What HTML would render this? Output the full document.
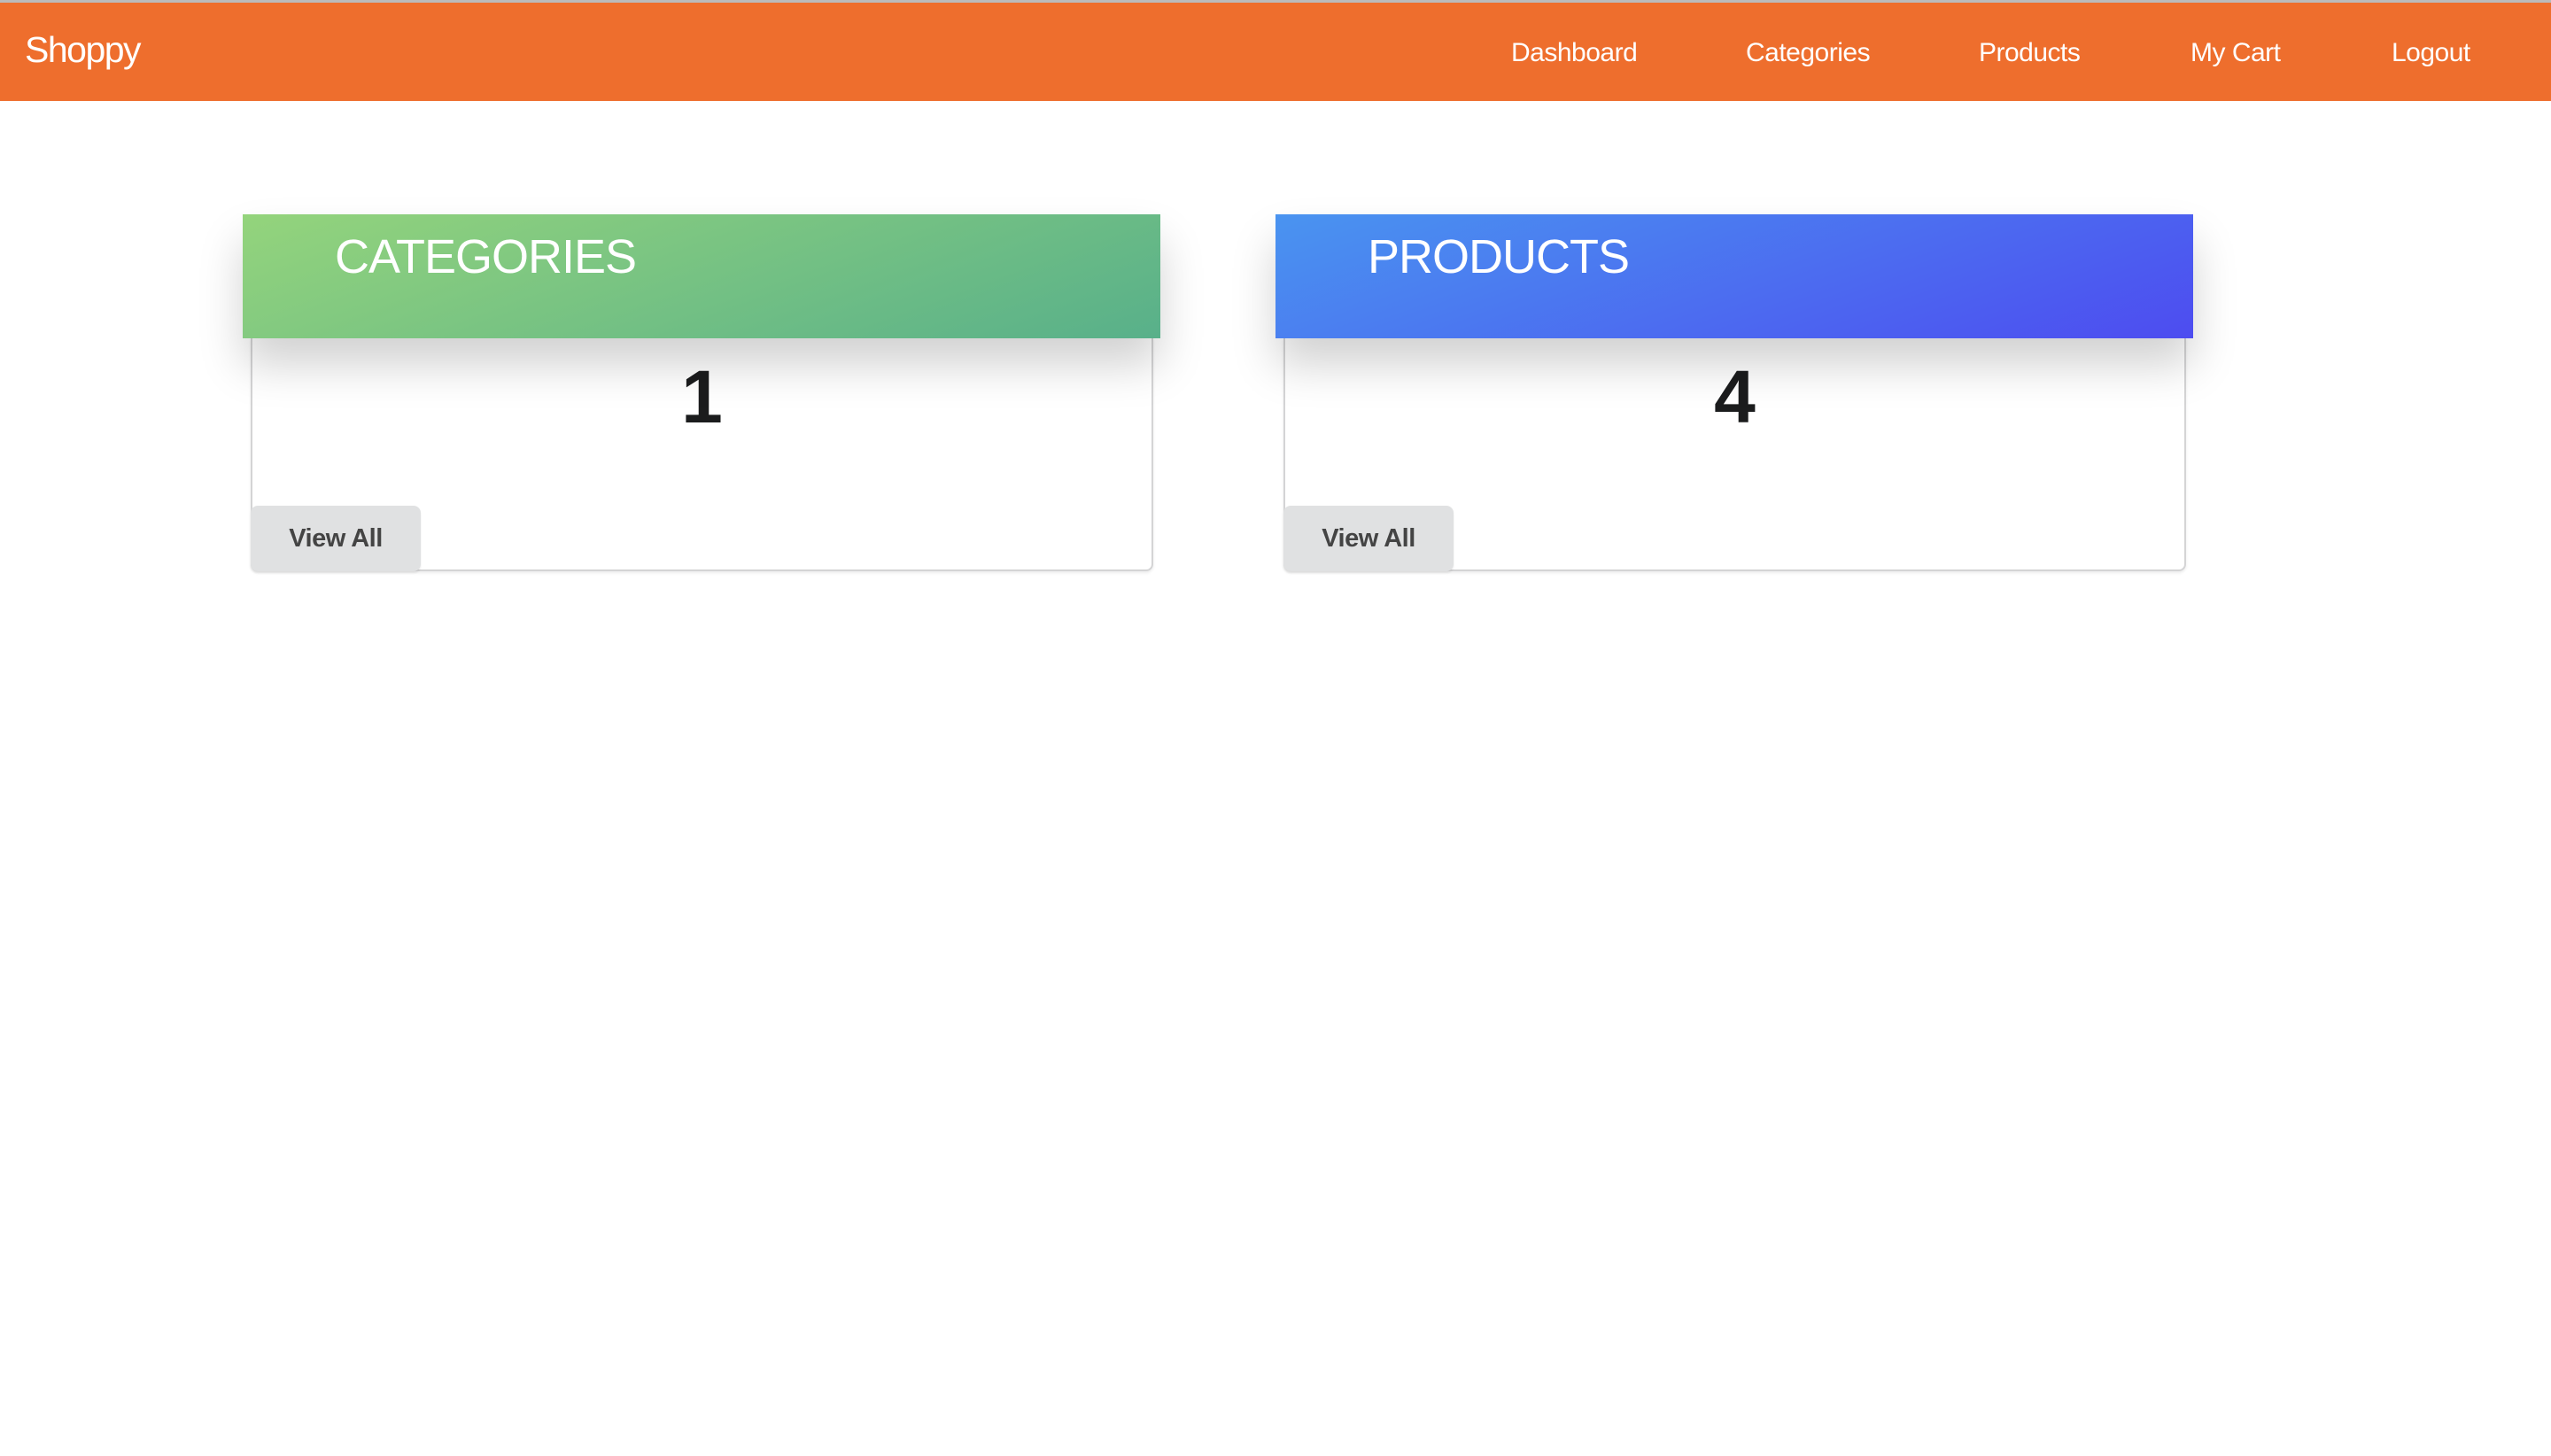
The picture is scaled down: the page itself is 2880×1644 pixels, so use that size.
<!DOCTYPE html>
<html><head><meta charset="utf-8"><style>
*{margin:0;padding:0;box-sizing:border-box}
body{width:2880px;height:1644px;background:#fff;font-family:"Liberation Sans",sans-serif;position:relative;overflow:hidden}
.nav{position:absolute;left:0;top:0;width:2880px;height:114px;background:#ee6e2d;border-top:3px solid #bbb}
.brand{position:absolute;left:28px;top:30px;color:#fff;font-size:41px;letter-spacing:-1.5px}
.nav a{position:absolute;top:40px;color:#fff;font-size:30px;text-decoration:none;letter-spacing:-0.5px}
.body{position:absolute;background:#fff;border:2px solid #d4d4d5;border-top:none;border-radius:0 0 8px 8px;box-shadow:0 2px 3px rgba(0,0,0,.08)}
.head{position:absolute;height:140px;box-shadow:0 30px 50px rgba(0,0,0,.18);color:#fff;font-size:54px;letter-spacing:-1px}
.head span{position:absolute;left:104px;top:17px}
.num{position:absolute;left:0;right:0;text-align:center;font-size:84px;font-weight:bold;color:#1b1c1d}
.btn{position:absolute;left:-2px;bottom:-2px;width:192px;height:74px;background:#e0e1e2;border-radius:8px;color:#444;font-size:29px;font-weight:bold;text-align:center;line-height:74px;letter-spacing:-0.5px;box-shadow:0 2px 2px rgba(0,0,0,.08)}
</style></head><body>
<div class="nav"><div class="brand">Shoppy</div>
<a style="left:1706px">Dashboard</a><a style="left:1971px">Categories</a><a style="left:2234px">Products</a><a style="left:2473px">My Cart</a><a style="left:2700px">Logout</a></div>

<div class="body" style="left:283px;top:382px;width:1019px;height:263px"><div class="num" style="top:18px">1</div><div class="btn">View All</div></div>
<div class="head" style="left:274px;top:242px;width:1036px;background:linear-gradient(160deg,#94d47c,#58b08a)"><span>CATEGORIES</span></div>

<div class="body" style="left:1449px;top:382px;width:1019px;height:263px"><div class="num" style="top:18px">4</div><div class="btn">View All</div></div>
<div class="head" style="left:1440px;top:242px;width:1036px;background:linear-gradient(160deg,#4a94f0,#4d4cf0)"><span>PRODUCTS</span></div>
</body></html>
